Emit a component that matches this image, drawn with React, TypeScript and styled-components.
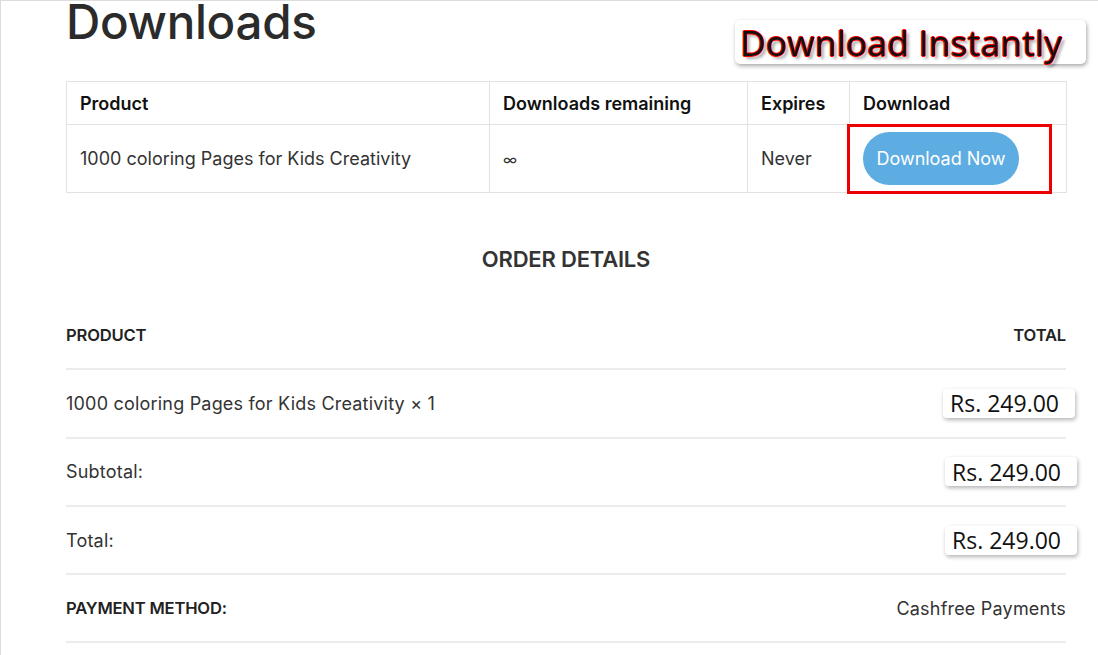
import styled, { createGlobalStyle } from "styled-components";

const GlobalStyle = createGlobalStyle`
  html, body {
    margin: 0;
    padding: 0;
    background: #ffffff;
  }
  body {
    font-family: Inter, "Open Sans", "Liberation Sans", sans-serif;
    color: #333333;
  }
  * {
    box-sizing: border-box;
  }
`;

const downloads = [
  {
    product: "1000 coloring Pages for Kids Creativity",
    remaining: "∞",
    expires: "Never",
  },
];

const orderRows = [
  { label: "Subtotal:", value: "Rs. 249.00" },
  { label: "Total:", value: "Rs. 249.00" },
];

const Page = styled.div`
  min-height: 100vh;
  border-top: 1px solid #dcdcdc;
  border-left: 1px solid #dcdcdc;
  overflow: hidden;
`;

const Content = styled.main`
  position: relative;
  width: 1000px;
  margin-left: 65px;
  padding-top: 1px;
`;

const Title = styled.h1`
  margin: -11px 0 0;
  height: 90px;
  font-size: 47.5px;
  font-weight: 500;
  letter-spacing: -0.3px;
  line-height: 62px;
  color: #2b2b2b;
`;

// annotation pasted over the page, not part of the flow
const Callout = styled.div`
  position: absolute;
  top: 19px;
  left: 669px;
  height: 44px;
  padding: 0 24px 0 5px;
  display: flex;
  align-items: center;
  white-space: nowrap;
  background: #fff;
  border-radius: 5px;
  box-shadow: 1px 2px 4px rgba(0, 0, 0, 0.35);
  font-family: "Open Sans", Inter, sans-serif;
  font-size: 35px;
  font-weight: 500;
  color: #111;
  letter-spacing: 0.4px;
  text-shadow: 0.8px 0 0 #ff0000, -0.8px 0 0 #ff0000, 0 0.8px 0 #ff0000,
    0 -0.8px 0 #ff0000, 3px 3px 3px rgba(0, 0, 0, 0.35);
`;

const DlTable = styled.table`
  width: 1000px;
  border-collapse: collapse;
  table-layout: fixed;
  font-size: 18px;
`;

const HeadCell = styled.th<{ $w: number }>`
  width: ${(p) => p.$w}px;
  height: 43px;
  padding: 0 13px;
  border: 1px solid #e2e2e2;
  text-align: left;
  font-weight: 600;
  color: #111;
`;

const Cell = styled.td`
  position: relative;
  height: 68px;
  padding: 0 13px;
  border: 1px solid #e2e2e2;
  color: #333;
  vertical-align: middle;
`;

const Infinity = styled.span`
  font-size: 15px;
`;

const Highlight = styled.div`
  position: absolute;
  left: -3px;
  top: -1px;
  width: 205px;
  height: 70px;
  border: 3px solid #ee0000;
  pointer-events: none;
`;

const DownloadButton = styled.a`
  display: inline-flex;
  align-items: center;
  justify-content: center;
  width: 156px;
  height: 53px;
  border-radius: 27px;
  background: #5dade2;
  color: #fff;
  font-size: 18px;
  text-decoration: none;
`;

const SectionTitle = styled.h2`
  margin: 46px 0 0;
  text-align: center;
  font-size: 22px;
  font-weight: 600;
  line-height: 40px;
  color: #333;
  letter-spacing: -0.2px;
`;

const OrderTable = styled.div`
  margin-top: 23px;
  display: flex;
  flex-direction: column;
`;

const OrderRow = styled.div`
  height: 68.3px;
  display: flex;
  align-items: center;
  justify-content: space-between;
  border-bottom: 2px solid #ececec;
`;

const Label = styled.span<{ $strong?: boolean }>`
  font-size: ${(p) => (p.$strong ? "16.6px" : "18px")};
  font-weight: ${(p) => (p.$strong ? 600 : 400)};
  text-transform: ${(p) => (p.$strong ? "uppercase" : "none")};
  color: ${(p) => (p.$strong ? "#222" : "#333")};
  letter-spacing: ${(p) => (p.$strong ? "-0.2px" : "0.2px")};
`;

const Price = styled.span<{ $shift: number }>`
  margin-right: ${(p) => -p.$shift}px;
  height: 29px;
  padding: 0 16px 0 7px;
  display: inline-flex;
  align-items: center;
  background: #fff;
  border-radius: 4px;
  box-shadow: 1px 2px 4px rgba(0, 0, 0, 0.3);
  font-family: "Open Sans", Inter, sans-serif;
  font-size: 23px;
  font-weight: 500;
  color: #111;
  letter-spacing: 0;
`;

export default function App() {
  return (
    <Page>
      <GlobalStyle />
      <Content>
        <Title>Downloads</Title>
        <Callout>Download Instantly</Callout>

        <DlTable>
          <thead>
            <tr>
              <HeadCell $w={423}>Product</HeadCell>
              <HeadCell $w={258}>Downloads remaining</HeadCell>
              <HeadCell $w={102}>Expires</HeadCell>
              <HeadCell $w={217}>Download</HeadCell>
            </tr>
          </thead>
          <tbody>
            {downloads.map((d) => (
              <tr key={d.product}>
                <Cell>{d.product}</Cell>
                <Cell>
                  <Infinity>{d.remaining}</Infinity>
                </Cell>
                <Cell>{d.expires}</Cell>
                <Cell>
                  <DownloadButton href="#">Download Now</DownloadButton>
                  <Highlight />
                </Cell>
              </tr>
            ))}
          </tbody>
        </DlTable>

        <SectionTitle>ORDER DETAILS</SectionTitle>

        <OrderTable>
          <OrderRow>
            <Label $strong>Product</Label>
            <Label $strong>Total</Label>
          </OrderRow>
          <OrderRow>
            <Label>1000 coloring Pages for Kids Creativity × 1</Label>
            <Price $shift={9}>Rs. 249.00</Price>
          </OrderRow>
          {orderRows.map((r) => (
            <OrderRow key={r.label}>
              <Label>{r.label}</Label>
              <Price $shift={11}>{r.value}</Price>
            </OrderRow>
          ))}
          <OrderRow>
            <Label $strong>Payment method:</Label>
            <Label>Cashfree Payments</Label>
          </OrderRow>
        </OrderTable>
      </Content>
    </Page>
  );
}
